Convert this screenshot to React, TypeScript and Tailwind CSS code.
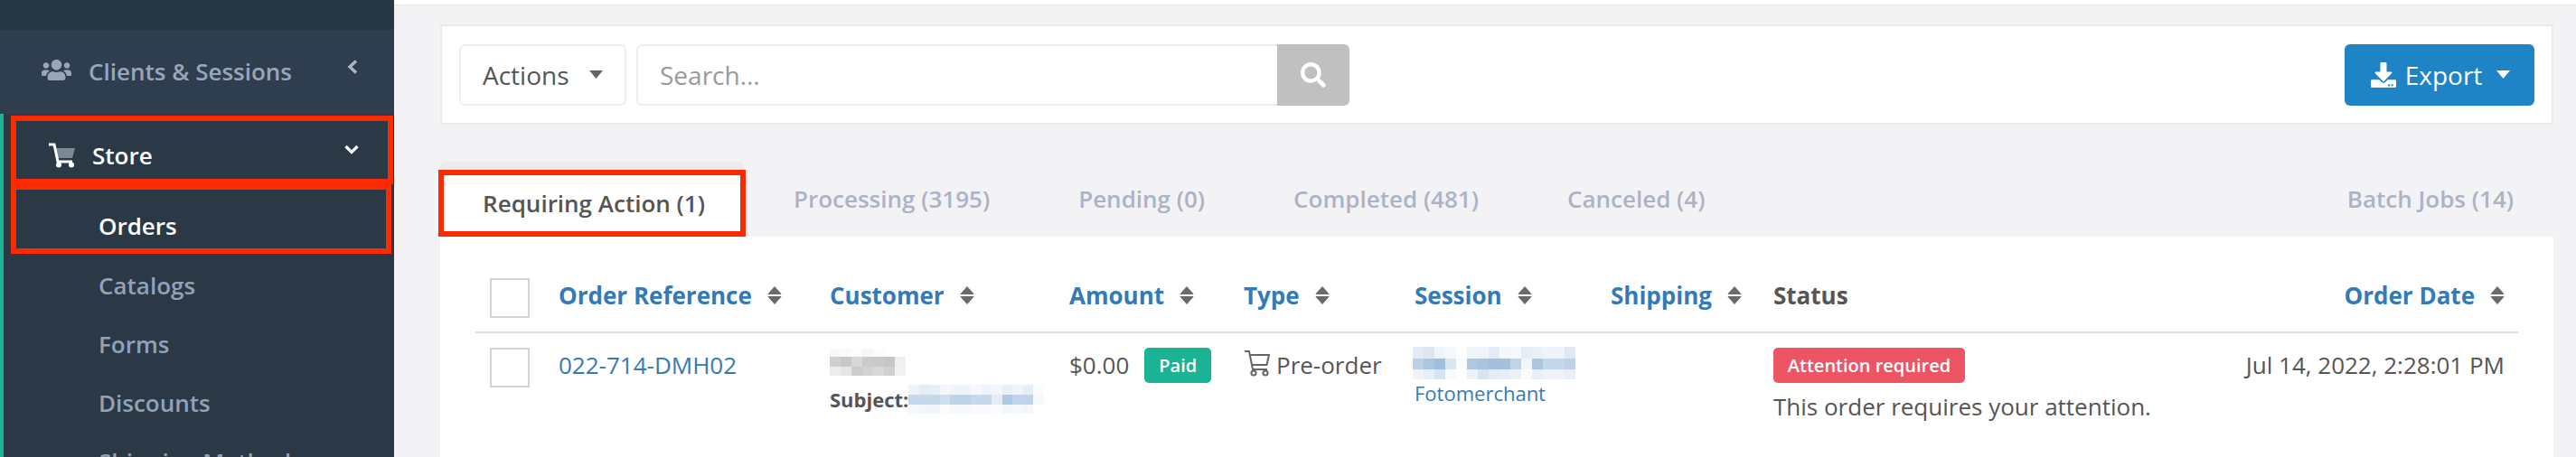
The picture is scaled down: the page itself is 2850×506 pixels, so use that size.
import React from "react";
import { FaUsers, FaSearch, FaDownload } from "react-icons/fa";

const Mosaic = ({ rows, cw, rh, className }: { rows: string[][]; cw: number; rh: number[]; className?: string }) => {
  let y = 0;
  const w = rows[0].length * cw;
  const h = rh.reduce((a, b) => a + b, 0);
  return (
    <svg width={w} height={h} className={className} shapeRendering="crispEdges">
      {rows.map((r, i) => {
        const top = y;
        y += rh[i];
        return r.map((c, j) => <rect key={`${i}-${j}`} x={j * cw} y={top} width={cw} height={rh[i]} fill={c} />);
      })}
    </svg>
  );
};

const customerRows = [
  ["#f8f8f8", "#fafafa", "#fdfdfd", "#f7f7f7", "#fcfcfc", "#ffffff", "#ffffff"],
  ["#d0d0d0", "#c8c8c8", "#d8d8d8", "#cbcbcb", "#cacaca", "#c6c6c6", "#f0f0f0"],
  ["#ececec", "#e6e6e6", "#cdcdcd", "#d3d3d3", "#d9d9d9", "#d0d0d0", "#f2f2f2"],
];
const subjectRows = [
  ["#eef4fa", "#e4edf6", "#e6eef7", "#f3f7fb", "#f0f5fa", "#f0f5fa", "#f5f8fc", "#eff4fa", "#f2f6fb", "#e9f0f8", "#eff4fa", "#e5edf6", "#fafcfe"],
  ["#c4d8ec", "#c4d8ec", "#c4d8ec", "#cfdfef", "#bdd3e9", "#bdd3e9", "#c6d9ec", "#c6d9ec", "#e4edf6", "#adc9e3", "#bfd4ea", "#bfd4ea", "#f5f8fc"],
  ["#f6f9fc", "#f2f6fb", "#f2f6fb", "#fafcfe", "#f6f9fc", "#f6f9fc", "#f8fafd", "#f8fafd", "#fcfdfe", "#f3f7fb", "#f6f9fc", "#f3f7fb", "#ffffff"],
];
const sessionRows = [
  ["#e3ecf6", "#dce7f3", "#eef4fa", "#f6f9fc", "#ffffff", "#f1f5fb", "#eef4fa", "#e3ecf6", "#f3f7fb", "#f6f9fc", "#e5edf6", "#e8f0f8", "#eff4fa", "#eff4fa", "#dfe9f4"],
  ["#b9d0e7", "#aac6e1", "#9fbedc", "#dae6f2", "#fafcfe", "#adc8e2", "#a8c4e0", "#a3c1de", "#a3c1de", "#c0d4e9", "#f3f7fb", "#abc6e1", "#c3d7eb", "#c3d7eb", "#bdd2e8"],
  ["#eef4fa", "#e6eef7", "#d7e4f1", "#f8fafd", "#ffffff", "#ecf2f9", "#d8e4f1", "#e4edf6", "#e6eef7", "#eaf1f8", "#f9fbfd", "#e9f0f8", "#edf3f9", "#edf3f9", "#e8eff7"],
];

const Sort = () => (
  <svg width="16" height="20" viewBox="0 0 16 20" className="shrink-0">
    <path d="M8 0.5 L15 8.5 H1 Z" fill="#6a6a6a" stroke="#6a6a6a" strokeLinejoin="round" />
    <path d="M1 11.5 H15 L8 19.5 Z" fill="#6a6a6a" stroke="#6a6a6a" strokeLinejoin="round" />
  </svg>
);

const Check = () => <div className="h-[44px] w-[44px] border-2 border-[#d6d3ce] bg-white" />;

const Caret = ({ className }: { className: string }) => (
  <svg width="15" height="9" viewBox="0 0 15 9" className={className}>
    <path d="M0 0 H15 L7.5 9 Z" fill="currentColor" />
  </svg>
);

const Head = ({ label, right }: { label: string; right?: boolean }) => (
  <div className={`flex items-center gap-[17px] pl-4 pr-4 ${right ? "justify-end" : ""}`}>
    <span className="text-[26px] leading-[34px] font-bold text-[#337ab7] whitespace-nowrap">{label}</span>
    <Sort />
  </div>
);

const Tab = ({ label, className = "" }: { label: string; className?: string }) => (
  <div className={`px-[49px] text-[26px] leading-[34px] font-semibold text-[#abb3c4] whitespace-nowrap ${className}`}>{label}</div>
);

const SubItem = ({ label }: { label: string }) => (
  <div className="flex h-[65px] shrink-0 items-center pl-[97px] text-[26px] font-semibold text-[#93a1b6] whitespace-nowrap">{label}</div>
);

const cols = "grid grid-cols-[76px_300px_265px_193px_189px_217px_180px_494px_347px]";

export default function App() {
  return (
    <div className="flex h-[506px] w-[2850px] overflow-hidden bg-[#f3f3f6] font-['Open_Sans',sans-serif] text-[#555]">
      <aside className="flex w-[436px] shrink-0 flex-col overflow-hidden bg-[#2b3947]">
        <div className="h-[33px] shrink-0 bg-[#283746]" />
        <div className="flex h-[93px] shrink-0 items-center bg-[#2f3e4f] pl-[46px] pr-[40px]">
          <FaUsers className="mt-[-5px] h-[33px] w-[33px] text-[#98a6bb]" />
          <span className="ml-[19px] flex-1 text-[26px] font-semibold text-[#98a6bb] whitespace-nowrap">Clients &amp; Sessions</span>
          <svg width="12" height="16" viewBox="0 0 12 16" className="mt-[-12px]">
            <path d="M10 1.5 L3 8 L10 14.5" fill="none" stroke="#a9b5c6" strokeWidth="3.4" />
          </svg>
        </div>
        <div className="flex flex-1 flex-col border-l-4 border-[#1ab394] pl-2 pt-[2px]">
          <div className="flex h-[76px] w-[423px] shrink-0 items-center border-[6px] border-[#fb2a00] pl-[36px] pr-[32px] pt-[12px]">
            <svg width="30" height="28" viewBox="0 0 30 28" className="shrink-0">
              <path d="M7 6 H29 L26 17 H9 Z" fill="#7d8895" />
              <path d="M0 2 H6 L10 21 H26" fill="none" stroke="#fff" strokeWidth="3" />
              <circle cx="11" cy="24.5" r="3" fill="#fff" />
              <circle cx="25" cy="24.5" r="3" fill="#fff" />
            </svg>
            <span className="ml-[18px] flex-1 text-[26px] font-semibold text-white">Store</span>
            <svg width="16" height="11" viewBox="0 0 16 11" className="mt-[-14px]">
              <path d="M1.5 2 L8 8.5 L14.5 2" fill="none" stroke="#fff" strokeWidth="3.2" />
            </svg>
          </div>
          <div className="mb-[3px] flex h-[77px] w-[421px] shrink-0 items-center border-[6px] border-[#fb2a00] pl-[91px] pt-[16px] text-[26px] font-semibold text-white">Orders</div>
          <SubItem label="Catalogs" />
          <SubItem label="Forms" />
          <SubItem label="Discounts" />
          <SubItem label="Shipping Methods" />
        </div>
      </aside>

      <main className="flex min-w-0 flex-1 flex-col">
        <div className="h-[6px] shrink-0 border-b border-[#e7e7ea] bg-white" />
        <div className="flex flex-1 flex-col pl-[51px] pr-[25px] pt-[21px]">
          <div className="flex h-[111px] shrink-0 items-center justify-between border-2 border-[#ebebee] bg-white px-[19px]">
            <div className="flex items-center gap-[11px]">
              <div className="flex h-[68px] w-[185px] items-center rounded-[6px] border-2 border-[#eeeeee] pl-[24px] text-[28px] text-[#555]">
                Actions
                <Caret className="ml-[22px] text-[#666]" />
              </div>
              <div className="flex h-[68px] w-[789px]">
                <div className="flex w-[709px] items-center rounded-l-[6px] border-2 border-r-0 border-[#eeeeee] pl-[24px] text-[28px] text-[#999]">Search...</div>
                <div className="flex w-[80px] items-center justify-center rounded-r-[6px] bg-[#c0c0c0]">
                  <FaSearch className="h-[28px] w-[28px] text-white" />
                </div>
              </div>
            </div>
            <div className="flex h-[68px] w-[210px] items-center justify-center rounded-[6px] bg-[#1f84c6] pl-[2px] text-[28px] text-white">
              <FaDownload className="h-[28px] w-[28px]" />
              <span className="ml-[10px]">Export</span>
              <Caret className="ml-[16px] text-white" />
            </div>
          </div>

          <div className="flex h-[124px] shrink-0 items-end">
            <div className="ml-[-2px] flex w-[340px] shrink-0 flex-col">
              <div className="mx-[2px] h-[9px] rounded-t-[6px] bg-[#ebebee]" />
              <div className="flex h-[74px] items-center justify-center border-[6px] border-[#fb2a00] bg-white pl-[4px] text-[26px] font-semibold text-[#555]">Requiring Action (1)</div>
            </div>
            <div className="flex flex-1 self-stretch items-start pt-[65px]">
              <Tab label="Processing (3195)" className="ml-[4px]" />
              <Tab label="Pending (0)" />
              <Tab label="Completed (481)" />
              <Tab label="Canceled (4)" />
              <Tab label="Batch Jobs (14)" className="ml-auto pr-[44px]" />
            </div>
          </div>

          <div className="flex-1 bg-white px-[39px]">
            <div className={`${cols} h-[107px] border-b-2 border-[#dddddd] pt-[46px]`}>
              <div className="pl-4"><Check /></div>
              <div className="pt-[2px]"><Head label="Order Reference" /></div>
              <div className="pt-[2px]"><Head label="Customer" /></div>
              <div className="pt-[2px]"><Head label="Amount" /></div>
              <div className="pt-[2px]"><Head label="Type" /></div>
              <div className="pt-[2px]"><Head label="Session" /></div>
              <div className="pt-[2px]"><Head label="Shipping" /></div>
              <div className="pl-4 pt-[2px] text-[26px] leading-[34px] font-bold text-[#555]">Status</div>
              <div className="pt-[2px]"><Head label="Order Date" right /></div>
            </div>
            <div className={`${cols} pt-[16px]`}>
              <div className="pl-4"><Check /></div>
              <div className="pl-4 pt-[2px] text-[26px] leading-[34px] text-[#337ab7]">022-714-DMH02</div>
              <div className="pl-4">
                <Mosaic rows={customerRows} cw={12} rh={[9, 11, 10]} className="mt-[1px] block" />
                <div className="mt-[10px] flex h-[32px] items-center">
                  <span className="text-[22px] font-bold text-[#555] whitespace-nowrap">Subject:</span>
                  <Mosaic rows={subjectRows} cw={11.5} rh={[11, 11, 10]} className="block" />
                </div>
              </div>
              <div className="flex items-start pl-4">
                <span className="pt-[2px] text-[26px] leading-[34px]">$0.00</span>
                <span className="ml-[17px] flex h-[39px] w-[74px] items-center justify-center rounded-[5px] bg-[#1ab394] text-[20px] font-semibold text-white">Paid</span>
              </div>
              <div className="flex items-start pl-4">
                <svg width="30" height="30" viewBox="0 0 30 30" className="mt-[2px] shrink-0">
                  <path d="M1 2 H6 L10 22 H26" fill="none" stroke="#666" strokeWidth="2" />
                  <path d="M7 6 H28 L25.5 17 H9" fill="none" stroke="#666" strokeWidth="2" />
                  <circle cx="11" cy="26" r="2.6" fill="none" stroke="#666" strokeWidth="2" />
                  <circle cx="24" cy="26" r="2.6" fill="none" stroke="#666" strokeWidth="2" />
                </svg>
                <span className="ml-[6px] pt-[2px] text-[26px] leading-[34px] whitespace-nowrap">Pre-order</span>
              </div>
              <div className="pl-[14px]">
                <Mosaic rows={sessionRows} cw={12} rh={[13, 12, 11]} className="-mt-[1px] block" />
                <div className="-mt-[1px] pl-[2px] text-[22px] leading-[32px] text-[#337ab7]">Fotomerchant</div>
              </div>
              <div />
              <div className="pl-4">
                <span className="inline-flex h-[39px] w-[212px] items-center justify-center rounded-[5px] bg-[#ed5565] text-[20px] font-semibold text-white">Attention required</span>
                <div className="mt-[9px] text-[26px] leading-[34px] whitespace-nowrap">This order requires your attention.</div>
              </div>
              <div className="pr-4 pt-[2px] text-right text-[26px] leading-[34px] whitespace-nowrap">Jul 14, 2022, 2:28:01 PM</div>
            </div>
          </div>
        </div>
      </main>
    </div>
  );
}
